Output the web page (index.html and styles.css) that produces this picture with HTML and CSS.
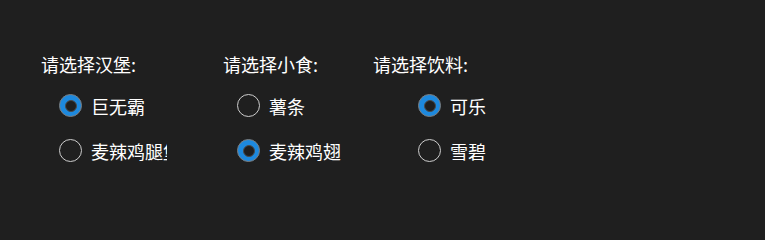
FILE: index.html
```html
<!DOCTYPE html>
<html lang="zh-CN">
<head>
<meta charset="utf-8">
<link rel="stylesheet" href="styles.css">
</head>
<body>
<div class="page">
  <section class="group group-burger">
    <div class="title">请选择汉堡:</div>
    <div class="options">
      <label class="option"><span class="radio checked"></span><span class="text">巨无霸</span></label>
      <label class="option"><span class="radio"></span><span class="text">麦辣鸡腿堡</span></label>
    </div>
  </section>
  <section class="group group-snack">
    <div class="title">请选择小食:</div>
    <div class="options">
      <label class="option"><span class="radio"></span><span class="text">薯条</span></label>
      <label class="option"><span class="radio checked"></span><span class="text">麦辣鸡翅</span></label>
    </div>
  </section>
  <section class="group group-drink">
    <div class="title">请选择饮料:</div>
    <div class="options">
      <label class="option"><span class="radio checked"></span><span class="text">可乐</span></label>
      <label class="option"><span class="radio"></span><span class="text">雪碧</span></label>
    </div>
  </section>
</div>
</body>
</html>
```
FILE: styles.css
```css
html, body {
  margin: 0;
  padding: 0;
  background: #1f1f1f;
  width: 765px;
  height: 223px;
  overflow: hidden;
}
.page {
  display: flex;
  padding: 52px 0 0 41px;
  font-family: "Noto Sans CJK SC", "Noto Sans", sans-serif;
  font-size: 18px;
  color: #ffffff;
}
.group {
  display: flex;
  flex-direction: column;
}
.title {
  height: 24px;
  line-height: 24px;
  white-space: nowrap;
}
.options {
  margin-top: 7px;
  display: flex;
  flex-direction: column;
  overflow: hidden;
}
.option {
  height: 45px;
  display: flex;
  align-items: center;
  gap: 9px;
  white-space: nowrap;
}
.radio {
  flex: none;
  box-sizing: border-box;
  width: 23px;
  height: 23px;
  border-radius: 50%;
  border: 1.6px solid #cdcdcd;
  display: flex;
  align-items: center;
  justify-content: center;
}
.radio.checked {
  border: 1px solid #7d7d7d;
  background: #1d89de;
}
.radio.checked::after {
  content: "";
  box-sizing: border-box;
  width: 12px;
  height: 12px;
  border-radius: 50%;
  background: #1f1f1f;
  border: 1px solid #4a4a4a;
}
.group-burger { width: 182px; }
.group-burger .options { margin-left: 18px; width: 108px; }
.group-snack { width: 150px; }
.group-snack .options { margin-left: 14px; }
.group-drink .options { margin-left: 45px; }
```
